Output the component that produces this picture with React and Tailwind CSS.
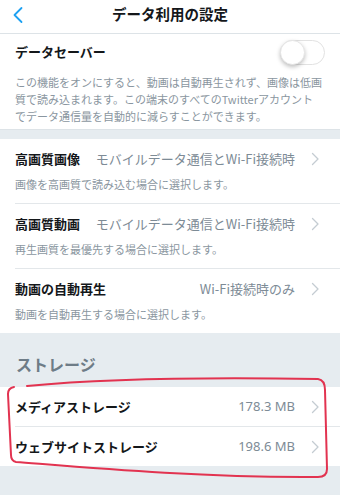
import React from "react";

const font = { fontFamily: '"Noto Sans CJK JP", "Noto Sans", sans-serif' };

function Chevron() {
  return (
    <svg width="9" height="14" viewBox="0 0 9 14" className="shrink-0">
      <polyline points="1.5,1.5 7,7 1.5,12.5" fill="none" stroke="#c4ccd2" strokeWidth="1.3" strokeLinecap="round" strokeLinejoin="round" />
    </svg>
  );
}

function SettingRow({ title, value, desc, border }) {
  return (
    <div className={border ? "ml-[15px] border-t border-[#e3e7ea]" : "ml-[15px]"}>
      <div className="pt-[10px] pb-[11px] pr-[20px]">
        <div className="flex items-center h-[20px]">
          <div className="text-[13px] font-bold text-[#14171a] whitespace-nowrap">{title}</div>
          <div className="flex-1 text-right text-[13px] text-[#7d8b96] whitespace-nowrap pr-[16px]">{value}</div>
          <Chevron />
        </div>
        <div className="mt-[7px] h-[16px] leading-[16px] text-[11px] text-[#8a96a0]">{desc}</div>
      </div>
    </div>
  );
}

function StorageRow({ title, value, border }) {
  return (
    <div className={border ? "ml-[15px] border-t border-[#e3e7ea]" : "ml-[15px]"}>
      <div className="h-[39px] flex items-center pr-[20px]">
        <div className="text-[13px] font-bold text-[#14171a] whitespace-nowrap">{title}</div>
        <div className="flex-1 text-right text-[13px] text-[#7d8b96] pr-[16px]" style={{ fontFamily: '"Noto Sans", sans-serif' }}>{value}</div>
        <Chevron />
      </div>
    </div>
  );
}

export default function App() {
  return (
    <div className="relative w-[340px] h-[495px] overflow-hidden bg-[#e6ecf0]" style={font}>
      {/* Header */}
      <div className="h-[34px] bg-white border-b border-[#dde3e7] flex items-center relative">
        <svg width="12" height="18" viewBox="0 0 12 18" className="ml-[12px] -mt-[3px]">
          <polyline points="9.5,2 2.5,9 9.5,16" fill="none" stroke="#1da1f2" strokeWidth="1.8" strokeLinecap="round" strokeLinejoin="round" />
        </svg>
        <div className="flex-1 text-center text-[14.5px] font-bold text-[#14171a] pr-[24px] -mt-[5px]">データ利用の設定</div>
      </div>

      {/* Data saver */}
      <div className="bg-white px-[15px] pt-[6px] pb-[4px]">
        <div className="flex items-center justify-between h-[24px]">
          <div className="text-[13px] font-bold text-[#14171a]">データセーバー</div>
          <div className="w-[45px] h-[25px] rounded-full border border-[#e2e2e2] bg-white relative">
            <div className="absolute left-[-1px] top-[-1px] w-[25px] h-[25px] rounded-full bg-white shadow-[0_2px_4px_rgba(0,0,0,0.25)] border border-[#e6e6e6]" />
          </div>
        </div>
        <div className="mt-[10px] text-[11px] leading-[17px] text-[#8a96a0] whitespace-nowrap">
          この機能をオンにすると、動画は自動再生されず、画像は低画<br />
          質で読み込まれます。この端末のすべてのTwitterアカウント<br />
          でデータ通信量を自動的に減らすことができます。
        </div>
      </div>

      {/* Gray band */}
      <div className="h-[10px] border-t border-[#dde3e7]" />

      {/* Quality settings */}
      <div className="bg-white">
        <SettingRow title="高画質画像" value="モバイルデータ通信とWi-Fi接続時" desc="画像を高画質で読み込む場合に選択します。" />
        <SettingRow title="高画質動画" value="モバイルデータ通信とWi-Fi接続時" desc="再生画質を最優先する場合に選択します。" border />
        <SettingRow title="動画の自動再生" value="Wi-Fi接続時のみ" desc="動画を自動再生する場合に選択します。" border />
      </div>

      {/* Storage header */}
      <div className="h-[54px] pt-[20px] px-[16px]">
        <div className="text-[16px] leading-[22px] font-bold text-[#6e7c87]">ストレージ</div>
      </div>

      {/* Storage */}
      <div className="bg-white">
        <StorageRow title="メディアストレージ" value="178.3 MB" />
        <StorageRow title="ウェブサイトストレージ" value="198.6 MB" border />
      </div>

      {/* Red annotation */}
      <svg className="absolute left-0 top-0 pointer-events-none" width="340" height="495" viewBox="0 0 340 495">
        <path
          d="M 27 386 C 100 379, 200 377, 318 379 Q 325 380 325 390 L 327 469 Q 327 477 318 477 C 200 478, 80 467, 16 462 Q 11 461 11 455 L 8 394 Q 8 388 14 387"
          fill="none"
          stroke="#e23350"
          strokeWidth="2"
          strokeLinecap="round"
          strokeLinejoin="round"
        />
      </svg>
    </div>
  );
}
